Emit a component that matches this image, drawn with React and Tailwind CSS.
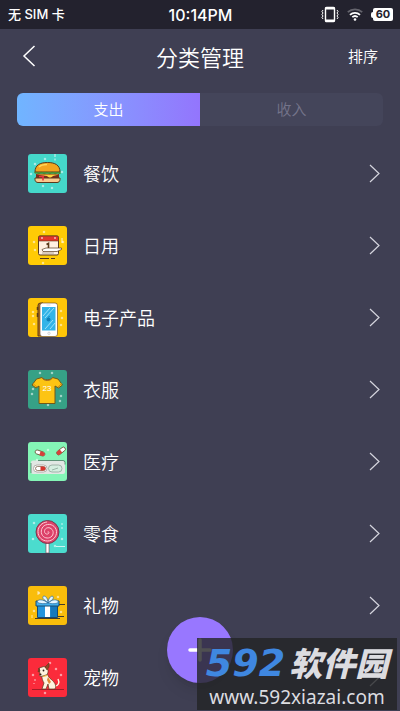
import { useState } from "react";

/*
  Category management
  - Status bar, header, expense / income tabs
  - Category list with floating add button
*/

const INK = "#5a3a1c";

/* ===== Category Icons ===== */
function Spark({ x, y }) {
  return (
    <path
      d={`M${x - 1.2} ${y}h2.4M${x} ${y - 1.2}v2.4`}
      stroke="#fff"
      strokeWidth="0.8"
      opacity="0.8"
    />
  );
}

function Tile({ color, sparks, children }) {
  return (
    <svg viewBox="0 0 39 39" className="size-[39px] shrink-0" fill="none" aria-hidden="true">
      <rect width="39" height="39" rx="3" fill={color} />
      {sparks.map(([x, y]) => (
        <Spark key={`${x}-${y}`} x={x} y={y} />
      ))}
      {children}
    </svg>
  );
}

function BurgerIcon() {
  return (
    <Tile color="#45d8ca" sparks={[[7, 10], [17, 5], [3, 20], [34, 18], [15, 32], [24, 34]]}>
      <path d="M27 0v3M27 4.5v2" stroke="#fff" opacity="0.8" />
      <path d="M7 18C7 11 12 8.500 19.500 8.500S32 11 32 18z" fill="#f3a51f" stroke={INK} />
      <path d="M11 13c2-2 5-2.500 8-2.500" stroke="#ffd65a" strokeWidth="1.5" />
      <rect x="8" y="20" width="23" height="5" fill="#7d2c1b" />
      <path d="M8 20.500h23l-6 1.500-3 2.500-3-2.500z" fill="#ffd23c" />
      <path d="M6.500 19c2-1.500 3.500 1 5.500 0s3.500 1 5.500 0 3.500 1 5.500 0 3.500 1 5.500 0 2.500 0 4 0" stroke="#4b8a2f" strokeWidth="1.8" />
      <path d="M7 24h25v1.500c0 2-1.500 3-3 3H10c-1.500 0-3-1-3-3z" fill="#f9c98d" stroke={INK} />
      <path d="M11 22.500h5M15 22.500v4" stroke="#e8343c" strokeWidth="1.6" />
    </Tile>
  );
}

function CalendarIcon() {
  return (
    <Tile color="#ffcb05" sparks={[[16, 6], [6, 16], [7, 24], [35, 16], [15, 37]]}>
      <path d="M34 12v5" stroke="#fff" strokeWidth="0.8" />
      <rect x="10.500" y="10" width="20" height="19" rx="1.5" fill="#fff0e2" stroke={INK} />
      <path d="M10.500 15v-3.500a1.500 1.500 0 0 1 1.500-1.500h17a1.500 1.500 0 0 1 1.500 1.500V15z" fill="#e3342b" stroke={INK} strokeWidth="0.6" />
      <path d="M14 11v2M27 11v2" stroke="#fff" />
      <path d="M18.500 18.500l2-1.200V23" stroke={INK} strokeWidth="1.6" />
      <path d="M14 23.500l4-1.500h15.500v1.500l-4.500 2H15z" fill="#fff" stroke={INK} strokeWidth="0.7" />
      <path d="M14 27h12" stroke="#b5a798" />
      <path d="M12 32.500h9M23 32.500h4" stroke={INK} />
    </Tile>
  );
}

function PhoneIcon() {
  return (
    <Tile color="#ffc608" sparks={[[5, 14], [5, 18], [6, 26], [33, 13], [34, 20], [33, 27]]}>
      <path d="M10 38V7.500A2.500 2.500 0 0 1 12.500 5H15v33z" fill="#b8741b" stroke={INK} />
      <path d="M9.500 9v3M9.500 15v4" stroke={INK} strokeWidth="1.5" />
      <rect x="12" y="5" width="17.500" height="33.500" rx="2.500" fill="#fff" stroke={INK} strokeWidth="0.6" />
      <rect x="14" y="9" width="13.500" height="23.500" fill="#32b4e8" />
      <path d="M15 18l7-8M17 20l9-10M17 31l8-9M22 31l5-6" stroke="#a5e5fb" strokeWidth="0.9" />
      <circle cx="20.500" cy="21.500" r="2" fill="#0e7fb8" />
      <path d="M20.500 19.500l1-1.500" stroke="#0e7fb8" />
      <path d="M18.500 7h4" stroke="#ddd" />
      <circle cx="21" cy="35.300" r="1.2" stroke="#bbb" strokeWidth="0.6" />
    </Tile>
  );
}

function ShirtIcon() {
  return (
    <Tile color="#36a186" sparks={[[12, 3], [24, 3], [5, 19], [4, 24], [33, 26], [32, 31], [20, 35]]}>
      <path d="M14 7.500L8.500 9 4 15l4 3 3-2v17.500H27V16l3.500 2 4-3-4.500-6-5.500-1.500c-1 3-9.500 3-10.500 0z" fill="#fcc413" stroke="#70581a" />
      <path d="M14 7.500c1.500 4 9 4 10.500 0" stroke="#a8691d" />
      <path d="M5 13.500l4 3.500M33.500 13.500L30 17" stroke="#d98d15" />
      <text x="19" y="21" textAnchor="middle" fontSize="8" fill="#fff" className="font-['Liberation_Sans']">23</text>
    </Tile>
  );
}

function PillsIcon() {
  return (
    <Tile color="#84f5b6" sparks={[[20, 8], [5, 22], [9, 18]]}>
      <g transform="rotate(20 12 11)">
        <rect x="7" y="9" width="10" height="4" rx="2" fill="#fff" stroke={INK} strokeWidth="0.7" />
        <path d="M12 9h3a2 2 0 0 1 0 4h-3z" fill="#d6423a" />
      </g>
      <g transform="rotate(-38 33 9)">
        <rect x="28" y="7" width="10" height="4" rx="2" fill="#fff" stroke={INK} strokeWidth="0.7" />
        <path d="M30 7h3v4h-3a2 2 0 0 1 0-4z" fill="#d6423a" />
      </g>
      <path d="M3 20.500a2 2 0 0 1 2-2h30a2 2 0 0 1 2 2V30a2 2 0 0 1-2 2H5a2 2 0 0 1-2-2z" fill="#e1e7e3" />
      <path d="M3 31V21M10 18.500h25q2 0 2 2v2" stroke="#386c51" strokeWidth="0.7" />
      <rect x="5.500" y="23" width="13.500" height="7" rx="3.500" fill="#fff" stroke="#a49c98" strokeWidth="0.8" />
      <rect x="7.500" y="24.500" width="10" height="4" rx="2" fill="#fff" stroke={INK} strokeWidth="0.6" />
      <path d="M12.500 24.500h3a2 2 0 0 1 0 4h-3z" fill="#d6342d" />
      <rect x="20.500" y="23" width="13.500" height="7" rx="3.500" fill="#d5eee0" stroke="#91a69a" strokeWidth="0.8" />
      <path d="M24 28l6-2" stroke="#99b6a6" />
    </Tile>
  );
}

function LollipopIcon() {
  return (
    <Tile color="#4bdcce" sparks={[[6, 9], [5, 25], [34, 25], [27, 32]]}>
      <path d="M34 9v2M34 13v2M28 32.500h9" stroke="#fff" strokeWidth="0.9" opacity="0.8" />
      <rect x="18" y="27" width="3" height="12" fill="#fff" stroke="#784151" strokeWidth="0.6" />
      <circle cx="19.500" cy="18" r="11.500" fill="#dc4169" stroke="#6d3548" strokeWidth="0.9" />
      <path
        d="M19.500 18c1-1 2 .5 1 1.500-1.500 1.500-4 0-4-2 0-3 3-4.500 5.500-3.500 3.500 1.500 4 5.500 2 8-2.500 3-7.500 2.500-9.500-.5-2.500-3.500-1-9 3-10.500 5-2 10.500 1 11 6.500.3 5.500-4 9.500-9 9.500-5.500 0-9.500-4-9.500-9.500 0-5 4-9 9-9.500"
        stroke="#ffc9d4"
      />
    </Tile>
  );
}

function GiftIcon() {
  return (
    <Tile color="#f9bd0b" sparks={[[11, 7], [30, 11], [6, 25], [33, 26]]}>
      <path d="M10 5v4M4 29v3" stroke="#fff" strokeWidth="0.8" opacity="0.8" />
      <path d="M31 18.500h6M29 30.500h7M7 32.500h25" stroke="#423b2b" />
      <path d="M9.500 19h20v12.500h-20z" fill="#2494dc" stroke="#174a70" />
      <path d="M17 19.500h5V31h-5z" fill="#fff" />
      <path d="M22.500 20H29v11h-6.500z" fill="#1679bd" />
      <path d="M8 15h23v5H8z" fill="#45b1ee" stroke="#174a70" />
      <path d="M20 17c-3 1-9 1-11-1 1-3 6-3 11 1zM20 17c-3-3-6-4-5-6.500 2-1.500 5 1.500 5 6.500zM20 17c0-4 3-8 5-6.500 1.500 2-2 4.500-5 6.500zM20 17c4-4 9.500-4 10.500-1-1.500 2-6.500 2-10.500 1z" fill="#e3f5ff" stroke="#276da0" strokeWidth="0.7" />
    </Tile>
  );
}

function DogIcon() {
  return (
    <Tile color="#fb2b3b" sparks={[[22, 5], [28, 11], [33, 17], [5, 17], [17, 35]]}>
      <path d="M7 21v2M6 25v1" stroke="#fff" strokeWidth="0.9" opacity="0.8" />
      <path d="M4 31.500h32" stroke="#8d1a22" strokeWidth="0.8" />
      <path d="M27 28c3 0 5-3 3-7" stroke="#fff3df" strokeWidth="1.5" />
      <path d="M14 17c-.5 4 1 6 2 8l-2 6h4l2-5 1 5h6c2-4-1-7-3-9-3-2-4-4-5-7z" fill="#fff3df" stroke={INK} strokeWidth="0.7" />
      <path d="M11 10l5-1.500 3 1.500c2 3 1 6-1 7l-5 1.500c-2-.5-2-1.500-1-2.500z" fill="#fff3df" stroke={INK} strokeWidth="0.7" />
      <path d="M17 9l4-4v4l-2 3zM11 10l-1 4 2-1z" fill="#8e4a28" stroke={INK} strokeWidth="0.6" />
      <path d="M20 19l3 5-2 2-2-4z" fill="#e08a35" />
      <circle cx="15.500" cy="12.500" r="0.9" fill="#2e1c14" />
      <circle cx="12.500" cy="16.500" r="1" fill="#2e1c14" />
      <path d="M15 18.500l4-1" stroke="#f8b52b" />
    </Tile>
  );
}

const categories = [
  { name: "餐饮", Icon: BurgerIcon },
  { name: "日用", Icon: CalendarIcon },
  { name: "电子产品", Icon: PhoneIcon },
  { name: "衣服", Icon: ShirtIcon },
  { name: "医疗", Icon: PillsIcon },
  { name: "零食", Icon: LollipopIcon },
  { name: "礼物", Icon: GiftIcon },
  { name: "宠物", Icon: DogIcon },
];

/* ===== Status Bar ===== */
function StatusBar() {
  return (
    <div className="grid h-[29px] shrink-0 grid-cols-3 items-center bg-[#23222e] pr-[7px] pl-2 font-['Inter','Noto_Sans_CJK_SC',sans-serif] font-medium text-white">
      <span className="text-[13px]">无 SIM 卡</span>
      <span className="text-center text-[16px]">10:14PM</span>
      <div className="flex items-center justify-end gap-2">
        <svg viewBox="0 0 18 17" className="h-[17px] w-[18px]" fill="none" stroke="#fff" aria-hidden="true">
          <rect x="4.500" y="1.500" width="9" height="14" rx="1" strokeWidth="1.4" />
          <path d="M4 2.500h10M4 14.500h10" strokeWidth="1.8" />
          <path d="M2 4l-1 1.500 1 1.500-1 1.500 1 1.500-1 1.500 1 1.500M16 4l1 1.500-1 1.500 1 1.500-1 1.500 1 1.500-1 1.500" />
        </svg>
        <svg viewBox="0 0 16 13" className="h-[13px] w-4" fill="none" stroke="#fff" strokeWidth="1.8" aria-hidden="true">
          <path d="M.8 4.200a10.500 10.500 0 0 1 14.400 0" opacity="0.3" />
          <path d="M3 6.800a7.300 7.300 0 0 1 10 0M5.300 9.200a4 4 0 0 1 5.400 0" />
          <circle cx="8" cy="11.500" r="1.3" fill="#fff" stroke="none" />
        </svg>
        <div className="flex items-center">
          <span className="h-1.5 w-0.5 rounded-l-sm bg-white" />
          <span className="flex h-[13px] w-5 items-center justify-center rounded-xs bg-white text-[11px] font-bold text-[#23222e]">60</span>
        </div>
      </div>
    </div>
  );
}

/* ===== Site Banner ===== */
function SiteBanner() {
  return (
    <div className="pointer-events-none absolute right-[3px] bottom-px flex h-[72px] w-[200px] flex-col items-center bg-[#232426]/80 pt-2 whitespace-nowrap">
      <div className="flex items-baseline gap-1 leading-8 font-bold italic">
        <span className="font-['DejaVu_Sans',sans-serif] text-[38px] text-[#3f87e0]">592</span>
        <span className="font-['Noto_Sans_CJK_SC',sans-serif] text-[33px] font-black text-[#dcdce0]">软件园</span>
      </div>
      <span className="mt-2 font-['Noto_Sans','Open_Sans',sans-serif] text-[19px] leading-5 font-normal text-[#dcdce0]">www.592xiazai.com</span>
    </div>
  );
}

function App() {
  const [tab, setTab] = useState("expense");

  const active = "bg-linear-to-r from-[#70b5ff] to-[#9375fd] text-white";
  const idle = "bg-[#44455a] text-[#74748a]";

  return (
    <div className="relative flex h-screen flex-col overflow-hidden bg-[#3f3f53] font-['Noto_Sans_CJK_SC',sans-serif] font-[350] text-white">
      <StatusBar />

      {/* ===== Header ===== */}
      <header className="grid h-16 shrink-0 grid-cols-3 items-center px-[22px] pb-2.5">
        <button aria-label="返回" className="justify-self-start">
          <svg viewBox="0 0 14 22" className="h-[22px] w-3.5" fill="none" stroke="#fff" strokeWidth="1.5" aria-hidden="true">
            <path d="M12.500 1L2 11l10.500 10" />
          </svg>
        </button>
        <h1 className="text-center text-[22px] whitespace-nowrap">分类管理</h1>
        <button className="justify-self-end text-[15px]">排序</button>
      </header>

      {/* ===== Tabs ===== */}
      <div className="mx-[17px] grid h-[33px] shrink-0 grid-cols-2 overflow-hidden rounded-md text-[15px]">
        <button onClick={() => setTab("expense")} className={tab === "expense" ? active : idle}>
          支出
        </button>
        <button onClick={() => setTab("income")} className={tab === "income" ? active : idle}>
          收入
        </button>
      </div>

      {/* ===== Category List ===== */}
      <ul className="mt-[11px]">
        {categories.map(({ name, Icon }) => (
          <li key={name}>
            <button className="flex h-[72px] w-full items-center pr-5 pl-7 text-left">
              <Icon />
              <span className="ml-4 flex-1 text-[18px]">{name}</span>
              <svg viewBox="0 0 11 19" className="h-[19px] w-[11px]" fill="none" stroke="#d5d5de" strokeWidth="1.2" aria-hidden="true">
                <path d="M1 1l9 8.500L1 18" />
              </svg>
            </button>
          </li>
        ))}
      </ul>

      {/* ===== Add Button ===== */}
      <button
        aria-label="添加"
        className="absolute bottom-7 left-1/2 flex size-[66px] -translate-x-1/2 items-center justify-center rounded-full bg-[#9877ff] shadow-lg"
      >
        <svg viewBox="0 0 24 24" className="size-6" stroke="#fff" strokeWidth="3.5" strokeLinecap="round" aria-hidden="true">
          <path d="M2 12h20M12 2v20" />
        </svg>
      </button>

      <SiteBanner />
    </div>
  );
}

export default App;
